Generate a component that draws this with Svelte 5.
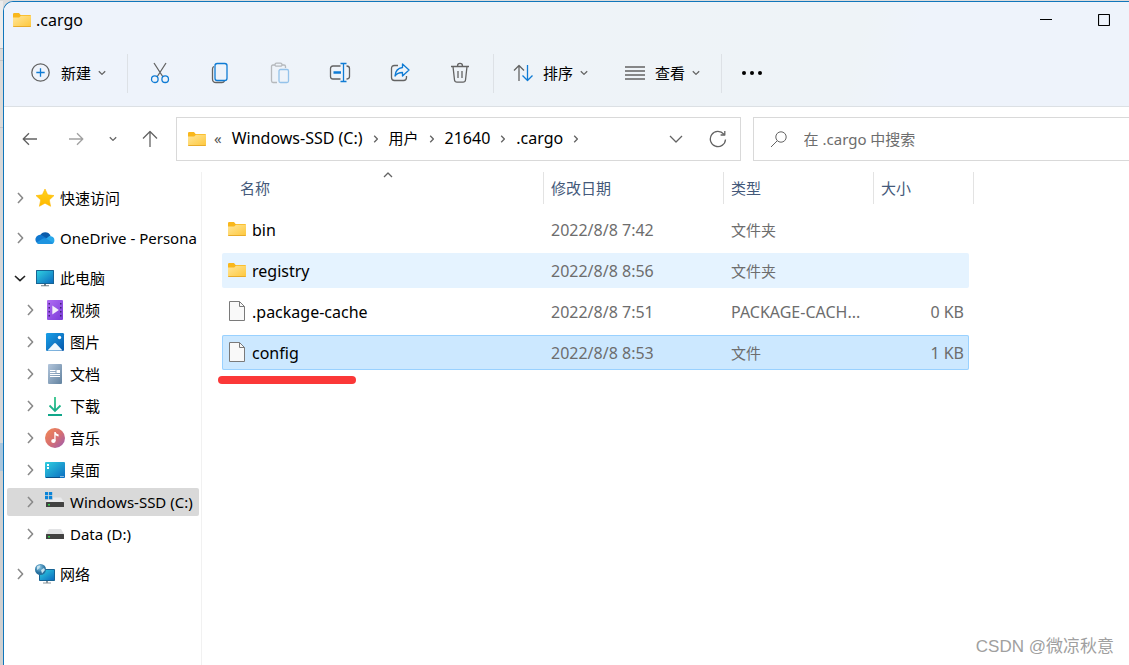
<script lang="ts">
  type TreeItem = { label: string; icon: string; depth: number; open?: boolean; active?: boolean };
  type FileEntry = { name: string; folder: boolean; date: string; type: string; size: string; state?: string };

  const tree: TreeItem[] = [
    { label: '快速访问', icon: 'star', depth: 0 },
    { label: 'OneDrive - Persona', icon: 'cloud', depth: 0 },
    { label: '此电脑', icon: 'pc', depth: 0, open: true },
    { label: '视频', icon: 'video', depth: 1 },
    { label: '图片', icon: 'picture', depth: 1 },
    { label: '文档', icon: 'document', depth: 1 },
    { label: '下载', icon: 'download', depth: 1 },
    { label: '音乐', icon: 'music', depth: 1 },
    { label: '桌面', icon: 'desktop', depth: 1 },
    { label: 'Windows-SSD (C:)', icon: 'ssd', depth: 1, active: true },
    { label: 'Data (D:)', icon: 'drive', depth: 1 },
    { label: '网络', icon: 'network', depth: 0 },
  ];

  const crumbs = ['Windows-SSD (C:)', '用户', '21640', '.cargo'];

  const files: FileEntry[] = [
    { name: 'bin', folder: true, date: '2022/8/8 7:42', type: '文件夹', size: '' },
    { name: 'registry', folder: true, date: '2022/8/8 8:56', type: '文件夹', size: '', state: 'hover' },
    { name: '.package-cache', folder: false, date: '2022/8/8 7:51', type: 'PACKAGE-CACH...', size: '0 KB' },
    { name: 'config', folder: false, date: '2022/8/8 8:53', type: '文件', size: '1 KB', state: 'selected' },
  ];

  let search = $state('');

  // latin text is set one pixel larger than the Chinese beside it
  const isLatin = (text: string) => /^[\x20-\x7e]+$/.test(text);
</script>

{#snippet folderIcon()}
  <svg class="folder" width="18" height="14" viewBox="0 0 18 14">
    <path d="M0 1.2Q0 0 1.2 0H6l1.6 2H17q1 0 1 1v5H0z" fill="#f9b71c" />
    <path d="M0 4.4h6.2L8 2.8h10V13q0 1-1 1H1q-1 0-1-1z" fill="url(#folderFill)" />
    <path d="M0 13h18q0 1-1 1H1q-1 0-1-1z" fill="#e8ab2a" />
  </svg>
{/snippet}

{#snippet fileIcon()}
  <svg class="file" width="18" height="20" viewBox="0 0 18 20">
    <path d="M1.5.5h10l5 5v14h-15z" fill="#f9f9f9" stroke="#7a7a7a" />
    <path d="M11.5.5v5h5" fill="none" stroke="#7a7a7a" />
  </svg>
{/snippet}

{#snippet smallDown()}
  <svg width="8" height="6" viewBox="0 0 8 6" class="line"><path d="M.8 1.2 4 4.4l3.2-3.2" /></svg>
{/snippet}

{#snippet right()}
  <svg width="6" height="8" viewBox="0 0 6 8" class="line crumb-arrow"><path d="M1.2.8 4.4 4 1.2 7.2" /></svg>
{/snippet}

{#snippet treeIcon(name: string)}
  <svg width="20" height="20" viewBox="0 0 20 20">
    {#if name === 'star'}
      <path d="M10 1l2.7 5.8 6.3.8-4.7 4.3 1.3 6.4-5.6-3.1-5.6 3.1 1.3-6.4L1 7.6l6.3-.8z" fill="url(#starFill)" stroke="#ffb900" stroke-width=".6" stroke-linejoin="round" />
    {:else if name === 'cloud'}
      <path d="M5 7.5a5.8 5.8 0 0 1 10.5 0L10 13z" fill="#0a5cab" />
      <path d="M5 16a4.6 4.6 0 1 1 2.3-8.6L16 13z" fill="#0f78d0" />
      <path d="M4.5 16 14 8.2a4 4 0 0 1 2 0A4 4 0 0 1 16.5 16z" fill="#28a8ea" />
      <path d="M1.5 14.5 8 10.5q2-.8 4 .6l6.5 4Q17.7 16 16.5 16h-12q-2 0-3-1.5z" fill="#1e94e0" />
    {:else if name === 'pc'}
      <rect x="1" y="2" width="18" height="14" rx=".6" fill="#176494" />
      <rect x="2" y="3" width="16" height="12" fill="url(#screenFill)" />
      <path d="M9 16h2v1.5H9zM6 17.3h8v1H6z" fill="#6d7b85" />
    {:else if name === 'video'}
      <rect x="2" y="0" width="16" height="20" rx="1" fill="url(#videoFill)" />
      <path d="M3.5 3H5v1.5H3.5zM3.5 7H5v1.5H3.5zM3.5 11H5v1.5H3.5zM3.5 15H5v1.5H3.5zM15 3h1.5v1.5H15zM15 7h1.5v1.5H15zM15 11h1.5v1.5H15zM15 15h1.5v1.5H15z" fill="#43207d" />
      <path d="M7.3 5.5v9l6.5-4.5z" fill="#f4effa" />
    {:else if name === 'picture'}
      <rect x="1" y="1" width="18" height="18" rx="1.2" fill="url(#pictureFill)" />
      <path d="M2.5 18.5 9 11.5q1-1 2 0l6.5 7z" fill="#eef7fd" />
      <circle cx="14.5" cy="5.5" r="1.7" fill="#fff" />
    {:else if name === 'document'}
      <rect x="3" y="0" width="14" height="20" rx="1" fill="url(#documentFill)" />
      <path d="M5 6.5h5.5M5 8.5h5.5M5 10.5h10M5 12.5h10" stroke="#fff" stroke-width="1" />
      <rect x="11.5" y="6" width="3.5" height="3" fill="#fff" />
    {:else if name === 'download'}
      <path d="M10 1v14M4.5 9.5 10 15l5.5-5.5M3 19h14" fill="none" stroke="url(#downloadFill)" stroke-width="1.8" />
    {:else if name === 'music'}
      <circle cx="10" cy="10" r="10" fill="url(#musicFill)" />
      <ellipse cx="8.4" cy="13" rx="2.2" ry="2" fill="#fff" />
      <path d="M9.3 4h1.3q.6 2 3 2.5v2q-1.8-.1-3-1.2V13H9.3z" fill="#fff" />
    {:else if name === 'desktop'}
      <rect x="0" y="2" width="20" height="16" rx="1" fill="url(#screenFill)" />
      <path d="M2 4h2v2H2zM2 7h2v2H2z" fill="#fff" />
      <path d="M1 17h14v1H1z" fill="#0a4f88" />
      <path d="M15.5 16h1v1h-1zM17.5 16h1v1h-1z" fill="#fff" />
    {:else if name === 'ssd'}
      <path d="M0 0h3.2v3.2H0zM4 0h3.2v3.2H4zM0 4h3.2v3.2H0zM4 4h3.2v3.2H4z" fill="#0a84d8" />
      <path d="M8 5.5h8l3 4.5H1L2.5 8H8z" fill="#e9eaec" />
      <rect x="1" y="10" width="18" height="5" rx=".5" fill="#424242" />
      <rect x="3" y="12" width="2" height="1.5" fill="#35d04b" />
    {:else if name === 'drive'}
      <path d="M4 5h12l3 5H1z" fill="#e2e3e5" />
      <rect x="1" y="10" width="18" height="5" rx=".5" fill="#424242" />
      <rect x="3" y="12" width="2" height="1.5" fill="#35d04b" />
    {:else}
      <rect x="4" y="5" width="16" height="12" rx=".8" fill="#176494" />
      <rect x="5" y="6" width="14" height="10" fill="url(#screenFill)" />
      <path d="M11 17h2v1.5h-2zM8 18.5h8v1H8z" fill="#8b959c" />
      <circle cx="5.5" cy="5.5" r="5.5" fill="url(#globeFill)" />
      <path d="M2 2.5q2-1.5 3.5-1L4 4.5 2 6zM6 6l3-2 1 2-3 3.5z" fill="#c6e3ef" />
    {/if}
  </svg>
{/snippet}

<svg class="defs" width="0" height="0" aria-hidden="true">
  <defs>
    <linearGradient id="folderFill" x1="0" y1="0" x2="1" y2="1"><stop stop-color="#ffe69a" /><stop offset="1" stop-color="#fec73a" /></linearGradient>
    <linearGradient id="starFill" x2="0" y2="1"><stop stop-color="#ffd21c" /><stop offset="1" stop-color="#ffb900" /></linearGradient>
    <linearGradient id="screenFill" x2="1" y2="1"><stop stop-color="#2fcfe0" /><stop offset="1" stop-color="#0b6cc0" /></linearGradient>
    <linearGradient id="videoFill" x2="1" y2="1"><stop stop-color="#b06cf3" /><stop offset="1" stop-color="#7a3bd8" /></linearGradient>
    <linearGradient id="pictureFill" x2="1" y2="1"><stop stop-color="#19a0e8" /><stop offset="1" stop-color="#0758ab" /></linearGradient>
    <linearGradient id="documentFill" x2="1" y2="1"><stop stop-color="#b3c6dc" /><stop offset="1" stop-color="#62829f" /></linearGradient>
    <linearGradient id="downloadFill" gradientUnits="userSpaceOnUse" x1="0" y1="0" x2="0" y2="20"><stop stop-color="#34c789" /><stop offset="1" stop-color="#0fa58a" /></linearGradient>
    <linearGradient id="musicFill" x2="1" y2="1"><stop stop-color="#f38a54" /><stop offset=".5" stop-color="#d9706e" /><stop offset="1" stop-color="#9a5bb5" /></linearGradient>
    <radialGradient id="globeFill" cx=".4" cy=".3"><stop stop-color="#8cc8e6" /><stop offset="1" stop-color="#26709e" /></radialGradient>
  </defs>
</svg>

<div class="screen">
  <div class="behind"></div>
  <div class="window">
    <header>
      <div class="titlebar">
        {@render folderIcon()}
        <span class="title latin">.cargo</span>
        <div class="caption">
          <button aria-label="最小化"><svg width="12" height="12" viewBox="0 0 12 12"><path d="M0 5.5h12" stroke="#000" /></svg></button>
          <button aria-label="最大化"><svg width="12" height="12" viewBox="0 0 12 12"><rect x=".5" y=".5" width="11" height="11" rx=".8" fill="none" stroke="#000" stroke-width="1.2" /></svg></button>
        </div>
      </div>

      <div class="toolbar">
        <button class="menu">
          <svg width="20" height="20" viewBox="0 0 20 20" class="line">
            <circle cx="9.5" cy="9.5" r="8.7" /><path class="blue" d="M9.5 5.3v8.4M5.3 9.5h8.4" />
          </svg>
          新建
          {@render smallDown()}
        </button>
        <span class="divider"></span>
        <div class="actions">
          <button class="action" aria-label="剪切">
            <svg width="20" height="22" viewBox="0 0 20 22" class="line">
              <path d="M4 1l9 14M16 1 7 15" />
              <circle class="blue" cx="4.8" cy="17.2" r="3.3" /><circle class="blue" cx="15.2" cy="17.2" r="3.3" />
            </svg>
          </button>
          <button class="action" aria-label="复制">
            <svg width="20" height="22" viewBox="0 0 20 22" class="line">
              <path d="M4 4.5Q2.5 5 2.5 7v10q0 3.5 3.5 3.5h6q1.800 0 2.5-1.5" />
              <rect class="blue" x="5" y="1.5" width="12" height="17" rx="2.2" />
            </svg>
          </button>
          <button class="action disabled" aria-label="粘贴" disabled>
            <svg width="20" height="22" viewBox="0 0 20 22" class="line">
              <path d="M5 3H3Q1.5 3 1.5 4.5v14Q1.5 20.5 3 20.5h4M12 3h2q1.5 0 1.5 1.5V6" />
              <rect x="5" y="1.2" width="7" height="3" rx="1.5" />
              <rect class="blue" x="9" y="7.5" width="9.5" height="13" rx="1.5" />
            </svg>
          </button>
          <button class="action" aria-label="重命名">
            <svg width="22" height="22" viewBox="0 0 22 22" class="line">
              <path d="M11.5 4H4Q1.5 4 1.5 6.5v8Q1.5 17 4 17h7.5M17.5 4q3 0 3 2.5v8q0 2.5-3 2.5" />
              <path class="blue" d="M14.5 1.5v18M11.5 1.5h6M11.5 19.5h6" />
              <path class="blue thick" d="M4.5 10.5H12" />
            </svg>
          </button>
          <button class="action" aria-label="共享">
            <svg width="20" height="22" viewBox="0 0 20 22" class="line">
              <path d="M8 3.5H4.5Q1.5 3.5 1.5 6.5v9q0 3 3 3h9q3 0 3-3V14" />
              <path class="blue" d="M12.5 2l6.5 6-6.5 6v-3.5q-5 0-7.5 3.5.5-7.5 7.5-8.500z" />
            </svg>
          </button>
          <button class="action" aria-label="删除">
            <svg width="20" height="22" viewBox="0 0 20 22" class="line">
              <path d="M1 4.5h18M3 4.5l1.5 13.5q.3 2.2 2.5 2.2h6q2.2 0 2.5-2.2L17 4.5M7.5 4q0-2.6 2.5-2.6T12.5 4M8 9v7M12 9v7" />
            </svg>
          </button>
        </div>
        <span class="divider"></span>
        <button class="menu">
          <svg width="20" height="20" viewBox="0 0 20 20" class="line">
            <path d="M6 18V2.5M1 7.5l5-5 5 5" /><path class="blue" d="M14.5 2v15.5M9.5 12.5l5 5 5-5" />
          </svg>
          排序
          {@render smallDown()}
        </button>
        <button class="menu view">
          <svg width="20" height="20" viewBox="0 0 20 20" class="line"><path d="M0 4h20M0 8h20M0 12h20M0 16h20" /></svg>
          查看
          {@render smallDown()}
        </button>
        <span class="divider"></span>
        <button class="action" aria-label="更多">
          <svg width="20" height="4" viewBox="0 0 20 4"><circle cx="2" cy="2" r="2" /><circle cx="10" cy="2" r="2" /><circle cx="18" cy="2" r="2" /></svg>
        </button>
      </div>
    </header>

    <div class="navbar">
      <nav class="history">
        <button aria-label="后退"><svg width="16" height="14" viewBox="0 0 16 14" class="line"><path d="M15 7H1.500M7 1.200 1.200 7 7 12.800" /></svg></button>
        <button aria-label="前进" class="dim"><svg width="16" height="14" viewBox="0 0 16 14" class="line"><path d="M1 7h13.500M9 1.200 14.800 7 9 12.800" /></svg></button>
        <button aria-label="最近" class="narrow">{@render smallDown()}</button>
        <button aria-label="向上"><svg width="16" height="18" viewBox="0 0 16 18" class="line"><path d="M8 17V2M1 8.500l7-7 7 7" /></svg></button>
      </nav>
      <div class="address">
        {@render folderIcon()}
        <span class="more">«</span>
        {#each crumbs as crumb}
          <a href="#top" class:latin={isLatin(crumb)}>{crumb}</a>
          {@render right()}
        {/each}
        <button class="expand" aria-label="展开"><svg width="14" height="8" viewBox="0 0 14 8" class="line"><path d="M1 1l6 6 6-6" /></svg></button>
        <button class="refresh" aria-label="刷新"><svg width="18" height="18" viewBox="0 0 18 18" class="line"><path d="M16.500 9.500A7.600 7.600 0 1 1 14.800 4.200M15.800 1v4h-4.200" /></svg></button>
      </div>
      <label class="search">
        <svg width="18" height="18" viewBox="0 0 18 18" class="line thin"><circle cx="11" cy="7" r="5.200" /><path d="M7.200 10.800 1 17" /></svg>
        <input type="text" bind:value={search} placeholder="在 .cargo 中搜索" aria-label="在 .cargo 中搜索" />
      </label>
    </div>

    <div class="body">
      <aside>
        {#each tree as item}
          <button class="node" class:child={item.depth === 1} class:active={item.active}>
            {#if item.open}
              <svg width="14" height="14" viewBox="0 0 14 14" class="line open"><path d="M2 5l5 4.600L12 5" /></svg>
            {:else}
              <svg width="14" height="14" viewBox="0 0 14 14" class="line closed"><path d="M5 2l4.600 5L5 12" /></svg>
            {/if}
            {@render treeIcon(item.icon)}
            <span>{item.label}</span>
          </button>
        {/each}
      </aside>

      <main>
        <table>
          <thead>
            <tr>
              <th>名称<svg class="sort line" width="10" height="6" viewBox="0 0 10 6"><path d="M1 5l4-4 4 4" /></svg></th>
              <th>修改日期</th>
              <th>类型</th>
              <th>大小</th>
            </tr>
          </thead>
          <tbody>
            {#each files as file}
              <tr class={file.state}>
                <td class="name latin">
                  {#if file.folder}{@render folderIcon()}{:else}{@render fileIcon()}{/if}
                  <span>{file.name}</span>
                </td>
                <td class="latin">{file.date}</td>
                <td class:latin={isLatin(file.type)}>{file.type}</td>
                <td class="size latin">{file.size}</td>
              </tr>
            {/each}
          </tbody>
        </table>
        <div class="marker"></div>
      </main>
    </div>
  </div>
  <div class="watermark">CSDN @微凉秋意</div>
</div>

<style>
  :global(body) {
    margin: 0;
    background: #fff;
  }

  .screen {
    position: relative;
    display: flex;
    min-height: 100vh;
    overflow: hidden;
    box-sizing: border-box;
    padding-top: 1px;
    background: #dcdcdc;
    font-family: "Noto Sans", "Noto Sans CJK SC", sans-serif;
    font-size: 15px;
    line-height: 20px;
    color: #000;
  }

  .latin {
    font-size: 16px;
  }

  .defs {
    position: absolute;
  }

  .behind {
    flex: 0 0 3px;
    background: linear-gradient(
      #ececec 47px, #bdbdbd 47px, #bdbdbd 48px, #dadada 48px, #dadada 59px, #c4c4c4 59px, #c4c4c4 60px,
      #dcdad8 60px, #dcdad8 126px, #c4c4c4 126px, #c4c4c4 127px, #d8d8d8 127px, #d8d8d8 442px,
      #a9c6dd 442px, #a9c6dd 470px, #d0d0d0 470px
    );
  }

  .window {
    flex: 1;
    min-width: 0;
    display: flex;
    flex-direction: column;
    border: solid #1176bb;
    border-width: 1px 0 0 1px;
    border-radius: 10px 0 0 0;
    background: #fff;
    overflow: hidden;
  }

  button {
    display: flex;
    align-items: center;
    justify-content: center;
    padding: 0;
    border: 0;
    background: none;
    font: inherit;
    color: inherit;
  }

  svg {
    flex: none;
  }

  .line {
    fill: none;
    stroke: #636363;
    stroke-width: 1.3;
    stroke-linejoin: round;
  }

  .thin {
    stroke-width: 1;
  }

  .blue {
    stroke: #0f7bd4;
  }

  .thick {
    stroke-width: 2.4;
  }

  header {
    background: linear-gradient(105deg, #eef3fb 15%, #eef3f8 35%, #eef3f7 75%, #eef3fb 80%);
    border-bottom: 1px solid #dce0e4;
  }

  .titlebar {
    display: flex;
    align-items: center;
    height: 36px;
    padding: 0 2px 0 9px;
  }

  .title {
    margin-left: 5px;
  }

  .caption {
    display: flex;
    gap: 12px;
    margin-left: auto;
  }

  .caption button {
    width: 46px;
    height: 36px;
  }

  .toolbar {
    display: flex;
    align-items: center;
    height: 66px;
    padding: 2px 0 0 18px;
  }

  .menu {
    gap: 10px;
    height: 40px;
    padding: 0 8px 0 9px;
    white-space: nowrap;
  }

  .menu svg:last-child {
    margin-left: -3px;
  }

  .view {
    margin-left: 20px;
  }

  .divider {
    width: 1px;
    height: 39px;
    margin: 0 10px 0 13px;
    background: #dde1e6;
  }

  .actions {
    display: flex;
    gap: 20px;
    padding-left: 2px;
  }

  .action {
    width: 40px;
    height: 40px;
  }

  .disabled {
    opacity: 0.4;
  }

  .navbar {
    display: flex;
    align-items: center;
    padding: 10px 0;
  }

  .history {
    display: flex;
    gap: 8px;
    width: 165px;
    padding-left: 7px;
  }

  .history button {
    width: 38px;
    height: 36px;
  }

  .history .narrow {
    width: 20px;
  }

  .history .dim {
    opacity: 0.6;
  }

  .address,
  .search {
    display: flex;
    align-items: center;
    box-sizing: border-box;
    height: 44px;
    min-width: 0;
    border: 1px solid #d9d9d9;
  }

  .address {
    flex: 3 1 30px;
    padding: 0 7px 0 11px;
    white-space: nowrap;
  }

  .address a {
    padding-bottom: 2px;
    color: inherit;
    text-decoration: none;
  }

  .more {
    margin: 0 10px 0 8px;
    padding-bottom: 2px;
    color: #555;
  }

  .crumb-arrow {
    margin: 0 10px;
  }

  .expand,
  .refresh {
    width: 30px;
    height: 30px;
  }

  .expand {
    margin-left: auto;
  }

  .refresh {
    margin-left: 12px;
  }

  .search {
    flex: 2 1 20px;
    margin-left: 12px;
    padding-left: 16px;
    border-right: 0;
  }

  .search input {
    flex: 1;
    min-width: 0;
    padding: 0;
    margin-left: 16px;
    border: 0;
    outline: 0;
    background: none;
    font: inherit;
  }

  .search input::placeholder {
    color: #6d6d6d;
    opacity: 1;
  }

  .body {
    flex: 1;
    display: flex;
    padding-top: 1px;
  }

  aside {
    flex: 0 0 192px;
    display: flex;
    flex-direction: column;
    gap: 4px;
    padding: 12px 2px 0 3px;
    border-right: 1px solid #f1f1f1;
  }

  .node {
    justify-content: flex-start;
    height: 28px;
    padding-left: 6px;
    border-radius: 2px;
    overflow: hidden;
    white-space: nowrap;
  }

  .node:not(.child):not(:first-child) {
    margin-top: 8px;
  }

  .child {
    padding-left: 16px;
  }

  .node span {
    margin-left: 5px;
  }

  .active {
    background: #d9d9d9;
  }

  .open,
  .closed {
    margin-right: 8px;
    stroke: #8a8a8a;
    stroke-width: 1.6;
  }

  .open {
    stroke: #222;
  }

  main {
    position: relative;
    flex: 1;
    min-width: 0;
    padding-left: 20px;
  }

  table {
    border-spacing: 0;
  }

  tr {
    display: grid;
    grid-template-columns: 321px 180px 150px 96px;
    box-sizing: border-box;
    width: 747px;
  }

  thead tr {
    grid-template-columns: 322px 180px 150px 100px;
    width: 752px;
    margin-bottom: 8px;
  }

  th {
    position: relative;
    box-sizing: border-box;
    height: 32px;
    padding: 6px 0 0 7px;
    border-right: 1px solid #e3e3e3;
    font-weight: 400;
    text-align: left;
    color: #44597a;
  }

  th:first-child {
    padding-left: 18px;
  }

  .sort {
    position: absolute;
    top: 0;
    left: 50%;
  }

  tbody tr {
    height: 35px;
    margin-bottom: 6px;
    border-radius: 2px;
  }

  td {
    box-sizing: border-box;
    padding: 8px 0 7px 8px;
    color: #6d6d6d;
    white-space: nowrap;
  }

  .name {
    display: flex;
    align-items: flex-start;
    gap: 6px;
    padding-left: 6px;
    color: #000;
  }

  .folder {
    margin-bottom: 1px;
  }

  .name .folder {
    margin-top: 2px;
  }

  .name .file {
    margin-top: -1px;
  }

  .size {
    padding-right: 5px;
    text-align: right;
  }

  .hover {
    background: #e5f3ff;
  }

  .selected {
    background: #cce8ff;
    box-shadow: inset 0 0 0 1px #99d1ff;
  }

  .marker {
    position: absolute;
    top: 204px;
    left: 16px;
    width: 138px;
    height: 8px;
    border-radius: 4px;
    background: #fb3838;
  }

  .watermark {
    position: absolute;
    right: 15px;
    bottom: 6px;
    font-family: "Liberation Sans", "Noto Sans CJK SC", sans-serif;
    font-size: 17px;
    line-height: 24px;
    color: #a0a0a0;
  }
</style>
